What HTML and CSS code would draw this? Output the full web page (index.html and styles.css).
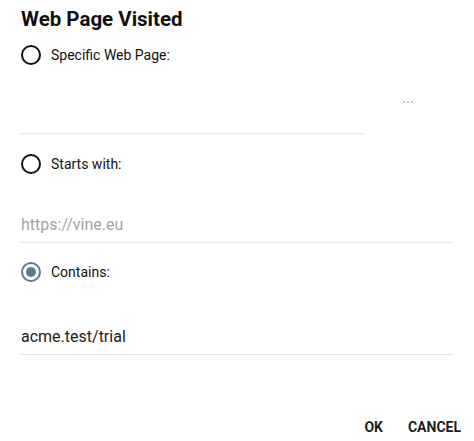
FILE: index.html
```html
<!DOCTYPE html>
<html>
<head>
<meta charset="utf-8">
<link rel="stylesheet" href="styles.css">
</head>
<body>
<div class="dialog">
  <h1 class="title">Web Page Visited</h1>

  <label class="radio-row row-1">
    <span class="radio"></span>
    <span class="radio-label">Specific Web Page:</span>
  </label>
  <div class="field field-1">
    <div class="input dotted short"></div>
    <div class="more"><i></i><i></i><i></i></div>
  </div>

  <label class="radio-row row-2">
    <span class="radio"></span>
    <span class="radio-label">Starts with:</span>
  </label>
  <div class="field field-2">
    <div class="input dotted placeholder">https://vine.eu</div>
  </div>

  <label class="radio-row row-3">
    <span class="radio checked"></span>
    <span class="radio-label">Contains:</span>
  </label>
  <div class="field field-3">
    <div class="input solid">acme.test/trial</div>
  </div>

  <div class="actions">
    <span class="btn">OK</span>
    <span class="btn">CANCEL</span>
  </div>
</div>
</body>
</html>
```
FILE: styles.css
```css
html, body {
  margin: 0;
  padding: 0;
  background: #fff;
}
body {
  font-family: Roboto, "Liberation Sans", Arial, sans-serif;
  color: #1a1a1a;
  width: 474px;
  height: 441px;
  overflow: hidden;
}
.dialog {
  padding: 0 21px;
  display: flex;
  flex-direction: column;
}
.title {
  margin: 0;
  padding-top: 6px;
  font-size: 20.5px;
  line-height: 26px;
  font-weight: 700;
  color: #111;
  height: 32px;
}
.radio-row {
  display: flex;
  align-items: center;
  height: 40px;
  gap: 10px;
}
.row-1 { margin-top: -3px; }
.row-2 { margin-top: 10px; }
.row-3 { margin-top: 9px; }
.radio {
  width: 20px;
  height: 20px;
  box-sizing: border-box;
  border: 2px solid #111;
  border-radius: 50%;
  display: flex;
  align-items: center;
  justify-content: center;
  flex: none;
}
.radio.checked {
  border-color: #5d7a8c;
}
.radio.checked::after {
  content: "";
  width: 10px;
  height: 10px;
  border-radius: 50%;
  background: #5d7a8c;
}
.radio-label {
  font-size: 14px;
  color: #111;
}
.field {
  display: flex;
  align-items: flex-end;
}
.field-1 { height: 59px; }
.field-2 { height: 59px; }
.field-3 { height: 63px; }
.input {
  flex: 1;
  font-size: 16px;
  line-height: 24px;
  padding-bottom: 5px;
  color: #222;
}
.input.dotted {
  border-bottom: 1px dotted #d5d5d5;
}
.input.solid {
  border-bottom: 1px solid #e2e2e2;
}
.input.short {
  flex: none;
  width: 342px;
  height: 24px;
}
.input.placeholder {
  color: #a4a4a4;
}
.more {
  flex: 1;
  align-self: flex-start;
  margin-top: 26px;
  display: flex;
  justify-content: center;
  gap: 2px;
  height: 2px;
}
.more i {
  display: block;
  width: 2px;
  height: 2px;
  background: #c3cbd9;
}
.actions {
  display: flex;
  justify-content: flex-end;
  gap: 25px;
  margin-top: 64px;
  margin-right: -8px;
}
.btn {
  font-size: 14px;
  font-weight: 700;
  color: #1e1e1e;
  line-height: 16px;
}
```
